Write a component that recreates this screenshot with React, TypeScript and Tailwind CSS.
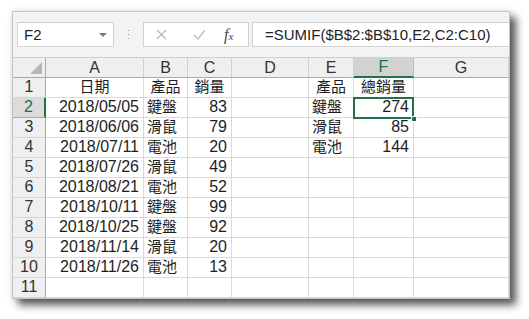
import React from "react";

const FONT = { fontFamily: '"Liberation Sans", "Noto Sans CJK TC", sans-serif' };

const data: string[][] = [
  ["日期", "產品", "銷量", "", "產品", "總銷量", ""],
  ["2018/05/05", "鍵盤", "83", "", "鍵盤", "274", ""],
  ["2018/06/06", "滑鼠", "79", "", "滑鼠", "85", ""],
  ["2018/07/11", "電池", "20", "", "電池", "144", ""],
  ["2018/07/26", "滑鼠", "49", "", "", "", ""],
  ["2018/08/21", "電池", "52", "", "", "", ""],
  ["2018/10/11", "鍵盤", "99", "", "", "", ""],
  ["2018/10/25", "鍵盤", "92", "", "", "", ""],
  ["2018/11/14", "滑鼠", "20", "", "", "", ""],
  ["2018/11/26", "電池", "13", "", "", "", ""],
  ["", "", "", "", "", "", ""],
];

const colAlign: ("l" | "c" | "r")[] = ["r", "l", "r", "l", "l", "r", "l"];
const cols = ["A", "B", "C", "D", "E", "F", "G"];

function alignClass(a: "l" | "c" | "r") {
  if (a === "l") return "justify-start pl-[3px]";
  if (a === "c") return "justify-center";
  return "justify-end pr-[4px]";
}

function isCJK(t: string) {
  return /[^\x00-\x7f]/.test(t);
}

export default function App() {
  return (
    <div className="w-[529px] h-[319px] bg-white overflow-hidden" style={FONT}>
      <div className="ml-[12px] mt-[11px] w-[498px] h-[288px] border border-[#c4c4c4] bg-white shadow-[6px_6px_8px_rgba(0,0,0,0.65),0_0_6px_rgba(0,0,0,0.12)] flex flex-col overflow-hidden">
        {/* formula bar */}
        <div className="h-[46px] bg-[#f3f3f3] border-b border-[#d0d0d0] flex items-start pt-[10px] pl-[4px]">
          <div className="w-[97px] h-[25px] bg-white border border-[#d2d2d2] flex items-center justify-between pl-[6px] pr-[6px]">
            <span className="text-[15px] text-[#222] leading-none">F2</span>
            <svg width="8" height="4" viewBox="0 0 8 4">
              <polygon points="0,0 8,0 4,4" fill="#7a7a7a" />
            </svg>
          </div>
          <div className="w-[29px] h-[25px] flex items-center justify-center">
            <svg width="3" height="10" viewBox="0 0 3 10">
              <rect x="1" y="0" width="1" height="1" fill="#9a9a9a" />
              <rect x="1" y="4" width="1" height="1" fill="#9a9a9a" />
              <rect x="1" y="8" width="1" height="1" fill="#9a9a9a" />
            </svg>
          </div>
          <div className="w-[106px] h-[25px] bg-white border border-[#d2d2d2] flex items-center">
            <svg className="ml-[12px]" width="11" height="11" viewBox="0 0 11 11">
              <path d="M1 1 L10 10 M10 1 L1 10" stroke="#b5b5b5" strokeWidth="1.2" />
            </svg>
            <svg className="ml-[26px]" width="13" height="11" viewBox="0 0 13 11">
              <path d="M1 6 L5 10 L12 1" stroke="#b5b5b5" strokeWidth="1.2" fill="none" />
            </svg>
            <span
              className="ml-[18px] text-[16px] text-[#444] italic leading-none"
              style={{ fontFamily: '"Liberation Serif", serif' }}
            >
              f<span className="text-[11px]">x</span>
            </span>
          </div>
          <div className="ml-[3px] flex-1 h-[25px] bg-white border border-[#d2d2d2] border-r-0 flex items-center pl-[12px]">
            <span className="text-[15px] text-[#222] leading-none">=SUMIF($B$2:$B$10,E2,C2:C10)</span>
          </div>
        </div>
        {/* grid */}
        <div className="grid grid-cols-[33px_98px_44px_44px_77px_45px_60px_1fr] text-[16px]">
          {/* header row */}
          <div className="h-[20px] bg-[#efefef] border-r border-b border-[#ababab] relative">
            <svg className="absolute right-[3px] bottom-[3px]" width="12" height="12" viewBox="0 0 12 12">
              <polygon points="12,0 12,12 0,12" fill="#b7b7b7" />
            </svg>
          </div>
          {cols.map((c) =>
            c === "F" ? (
              <div
                key={c}
                className="h-[20px] bg-[#d2d2d2] border-r border-[#bdbdbd] border-b-2 border-b-[#217346] flex items-center justify-center text-[#217346] text-[16px]"
              >
                {c}
              </div>
            ) : (
              <div
                key={c}
                className="h-[20px] bg-[#efefef] border-r border-[#d0d0d0] border-b border-b-[#ababab] flex items-center justify-center text-[#333] text-[16px]"
              >
                {c}
              </div>
            )
          )}
          {data.map((row, ri) => (
            <React.Fragment key={ri}>
              {ri === 1 ? (
                <div className="h-[20px] bg-[#dcdcdc] border-r-2 border-r-[#217346] border-b border-b-[#ababab] flex items-end justify-center pb-[1px] text-[#217346] text-[16px] leading-[18px]">
                  {ri + 1}
                </div>
              ) : (
                <div className="h-[20px] bg-[#efefef] border-r border-[#ababab] border-b border-b-[#d6d6d6] flex items-end justify-center pb-[1px] text-[#333] text-[16px] leading-[18px]">
                  {ri + 1}
                </div>
              )}
              {row.map((t, ci) => {
                const a = ri === 0 ? "c" : colAlign[ci];
                const sel = ri === 1 && ci === 5;
                return (
                  <div
                    key={ci}
                    className={
                      "h-[20px] border-r border-b border-[#dadada] flex items-end pb-[1px] leading-[18px] text-[#1e1e1e] relative " +
                      alignClass(a) +
                      (sel ? " z-10" : "")
                    }
                  >
                    <span className={isCJK(t) ? "text-[15px]" : "text-[16px]"}>{t}</span>
                    {sel && (
                      <>
                        <div className="absolute -left-[1px] -top-[1px] -right-[1px] -bottom-[2px] border-2 border-[#217346]" />
                        <div className="absolute -right-[4px] -bottom-[5px] w-[6px] h-[6px] bg-[#217346] border border-white" />
                      </>
                    )}
                  </div>
                );
              })}
            </React.Fragment>
          ))}
        </div>
      </div>
    </div>
  );
}
